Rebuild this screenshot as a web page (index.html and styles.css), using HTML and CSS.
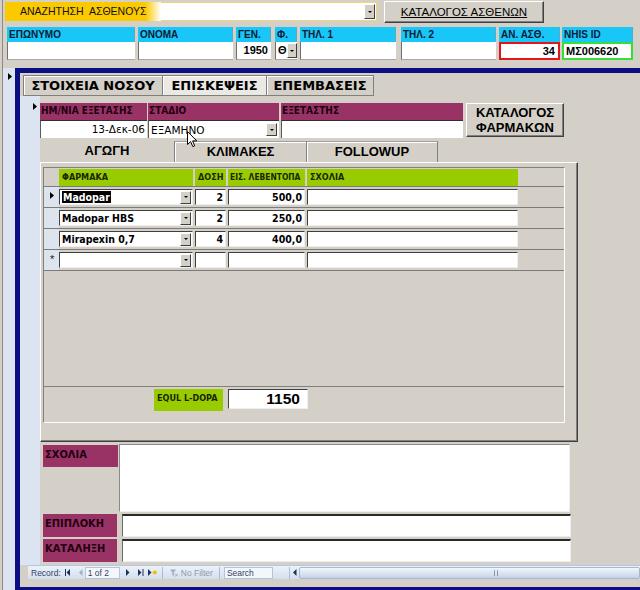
FILE: index.html
```html
<!DOCTYPE html>
<html lang="el">
<head>
<meta charset="utf-8">
<title>Ασθενείς</title>
<link rel="stylesheet" href="styles.css">
</head>
<body>
<div class="screen">
  <header class="hdr">
    <div class="hdr-top">
      <div class="search-lbl">ΑΝΑΖΗΤΗΣΗ&nbsp; ΑΣΘΕΝΟΥΣ</div>
      <div class="search-combo">
        <span class="dd"><span class="dd-mark"></span></span>
      </div>
      <button class="btn btn-patients"><u>ΚΑΤΑΛΟΓΟΣ ΑΣΘΕΝΩΝ</u></button>
    </div>
    <div class="hdr-fields">
      <div class="hf w-sur"><div class="cl">ΕΠΩΝΥΜΟ</div><div class="ci"></div></div>
      <div class="hf w-name"><div class="cl">ΟΝΟΜΑ</div><div class="ci"></div></div>
      <div class="hf w-yr"><div class="cl">ΓΕΝ.</div><div class="ci num">1950</div></div>
      <div class="hf w-sex"><div class="cl">Φ.</div><div class="ci combo-sm"><span>Θ</span><span class="dd dd-sm"><span class="dd-mark"></span></span></div></div>
      <div class="hf w-t1"><div class="cl">ΤΗΛ. 1</div><div class="ci"></div></div>
      <div class="hf w-t2"><div class="cl">ΤΗΛ. 2</div><div class="ci"></div></div>
      <div class="hf w-an"><div class="cl">ΑΝ. ΑΣΘ.</div><div class="ci num red">34</div></div>
      <div class="hf w-nhis"><div class="cl">NHIS ID</div><div class="ci green">ΜΣ006620</div></div>
    </div>
  </header>

  <div class="main">
    <div class="rec-strip"><svg class="tri" width="5" height="7" viewBox="0 0 5 7"><path d="M0 0L4 3.5L0 7Z"/></svg></div>
    <div class="frame">
      <nav class="tabs">
        <div class="tab t1">ΣΤΟΙΧΕΙΑ ΝΟΣΟΥ</div>
        <div class="tab t2 active">ΕΠΙΣΚΕΨΕΙΣ</div>
        <div class="tab t3">ΕΠΕΜΒΑΣΕΙΣ</div>
      </nav>
      <div class="page">
        <div class="rec-col"><svg class="tri" width="5" height="7" viewBox="0 0 5 7"><path d="M0 0L4 3.5L0 7Z"/></svg></div>
        <div class="detail">
          <div class="visit">
            <div class="vf w-date"><div class="ml">ΗΜ/ΝΙΑ ΕΞΕΤΑΣΗΣ</div><div class="vi num">13-Δεκ-06</div></div>
            <div class="vf w-stage"><div class="ml">ΣΤΑΔΙΟ</div><div class="vi combo"><span>ΕΞΑΜΗΝΟ</span><span class="dd dd-st"><span class="dd-mark"></span></span></div></div>
            <div class="vf w-exam"><div class="ml">ΕΞΕΤΑΣΤΗΣ</div><div class="vi"></div></div>
            <button class="btn btn-drugs">ΚΑΤΑΛΟΓΟΣ<br>ΦΑΡΜΑΚΩΝ</button>
            <svg class="cursor" width="11" height="17" viewBox="0 0 11 17"><path d="M0.5 0.5V13.5L3.6 10.6L5.8 15.6L7.7 14.8L5.6 9.9H9.8Z" fill="#fff" stroke="#000" stroke-width="1"/></svg>
          </div>

          <div class="itabs">
            <div class="itab active">ΑΓΩΓΗ</div>
            <div class="itab">ΚΛΙΜΑΚΕΣ</div>
            <div class="itab last">FOLLOWUP</div>
          </div>

          <div class="ipanel">
            <div class="sub">
              <div class="sub-head">
                <div class="sel"></div>
                <div class="gl c-drug">ΦΑΡΜΑΚΑ</div>
                <div class="gl c-dose">ΔΟΣΗ</div>
                <div class="gl c-lev lev-lbl">ΕΙΣ. ΛΕΒΕΝΤΟΠΑ</div>
                <div class="gl c-note">ΣΧΟΛΙΑ</div>
              </div>
              <div class="srow">
                <div class="sel"><svg class="tri" width="5" height="7" viewBox="0 0 5 7"><path d="M0 0L4 3.5L0 7Z"/></svg></div>
                <div class="sc c-drug combo"><span><span class="hl">Madopar</span></span><span class="dd dd-row"><span class="dd-mark"></span></span></div>
                <div class="sc c-dose num">2</div>
                <div class="sc c-lev num">500,0</div>
                <div class="sc c-note"></div>
              </div>
              <div class="srow">
                <div class="sel"></div>
                <div class="sc c-drug combo"><span>Madopar HBS</span><span class="dd dd-row"><span class="dd-mark"></span></span></div>
                <div class="sc c-dose num">2</div>
                <div class="sc c-lev num">250,0</div>
                <div class="sc c-note"></div>
              </div>
              <div class="srow">
                <div class="sel"></div>
                <div class="sc c-drug combo"><span>Mirapexin 0,7</span><span class="dd dd-row"><span class="dd-mark"></span></span></div>
                <div class="sc c-dose num">4</div>
                <div class="sc c-lev num">400,0</div>
                <div class="sc c-note"></div>
              </div>
              <div class="srow">
                <div class="sel"><span class="star">*</span></div>
                <div class="sc c-drug combo"><span></span><span class="dd dd-row"><span class="dd-mark"></span></span></div>
                <div class="sc c-dose num"></div>
                <div class="sc c-lev num"></div>
                <div class="sc c-note"></div>
              </div>
              <div class="sub-fill"></div>
              <div class="sub-foot">
                <div class="gl eq">EQUL L-DOPA</div>
                <div class="eq-val">1150</div>
              </div>
            </div>
          </div>

          <div class="notes">
            <div class="nrow r-big"><div class="nl nl-big">ΣΧΟΛΙΑ</div><div class="ni ni-big"></div></div>
            <div class="nrow r-sm"><div class="nl">ΕΠΙΠΛΟΚΗ</div><div class="ni ni-sm"></div></div>
            <div class="nrow r-sm"><div class="nl">ΚΑΤΑΛΗΞΗ</div><div class="ni ni-sm"></div></div>
          </div>
        </div>
      </div>

      <div class="navbar">
        <span class="nb-lbl">Record:</span>
        <svg class="nb-first" width="5" height="7" viewBox="0 0 5 7"><rect x="0" y="0" width="1" height="7"/><path d="M5 0V7L1.5 3.5Z"/></svg>
        <svg class="nb-prev" width="4" height="7" viewBox="0 0 4 7"><path d="M3.5 0V7L0 3.5Z"/></svg>
        <span class="nb-box">1 of 2</span>
        <svg class="nb-next" width="4" height="7" viewBox="0 0 4 7"><path d="M0 0V7L3.5 3.5Z"/></svg>
        <svg class="nb-last" width="6" height="7" viewBox="0 0 6 7"><path d="M0 0V7L3.5 3.5Z"/><rect x="4.5" y="0" width="1" height="7"/></svg>
        <svg class="nb-new" width="9" height="7" viewBox="0 0 9 7"><path d="M0 0V7L3.5 3.5Z"/><circle cx="6.8" cy="3.5" r="2.1" fill="#f2c200"/></svg>
        <span class="nb-sep s1"></span>
        <svg class="nb-filter" width="8" height="8" viewBox="0 0 8 8"><path d="M0 0.5H6L3.8 3.5V7L2.4 6.2V3.5Z" fill="#a2acbb"/><path d="M5 4.5L8 7.5M8 4.5L5 7.5" stroke="#a2acbb" stroke-width="1"/></svg>
        <span class="nb-nf">No Filter</span>
        <span class="nb-sep s2"></span>
        <span class="nb-search">Search</span>
        <span class="nb-sep s3"></span>
        <svg class="nb-left" width="4" height="7" viewBox="0 0 4 7"><path d="M3.5 0V7L0 3.5Z"/></svg>
        <div class="nb-scroll"><span class="grip"></span></div>
      </div>
    </div>
  </div>
</div>
</body>
</html>
```

FILE: styles.css
```css
* { box-sizing: border-box; }
html, body { margin: 0; padding: 0; }
body {
  background: #d4d0c8;
  font-family: "Liberation Sans", Arial, sans-serif;
  color: #000;
}
.screen { width: 640px; height: 590px; overflow: hidden; }

/* ---------- header ---------- */
.hdr {
  height: 68px;
  box-shadow: inset 2px 0 0 #d4d0c8, inset 3px 0 0 #8e8b84;
}
.hdr-top {
  display: flex;
  align-items: flex-start;
  height: 27px;
  padding: 1px 0 0 5px;
}
.search-lbl {
  width: 156px;
  height: 19px;
  margin-top: 1px;
  background: linear-gradient(90deg, #fbc900 0, #fbc900 90%, #fff 100%);
  font-size: 10.5px;
  line-height: 19px;
  padding-left: 15px;
  white-space: nowrap;
  color: #111;
}
.search-combo {
  display: flex;
  justify-content: flex-end;
  width: 216px;
  height: 19px;
  margin-top: 1px;
  background: #fff;
  border: 1px solid #f1d57c;
  border-left: none;
  padding: 1px 1px 1px 0;
}
.dd {
  display: flex;
  align-items: center;
  justify-content: center;
  width: 11px;
  height: 100%;
  background: #d4d0c8;
  border: 1px solid;
  border-color: #fff #404040 #404040 #fff;
  flex-shrink: 0;
}
.dd-mark {
  width: 0; height: 0;
  border-left: 2px solid transparent;
  border-right: 2px solid transparent;
  border-top: 2px solid #000;
}
.btn {
  font-family: "Liberation Sans", Arial, sans-serif;
  background: #d4d0c8;
  border: 1px solid;
  border-color: #fff #404040 #404040 #fff;
  box-shadow: inset -1px -1px 0 #808080;
  padding: 0;
  color: #000;
}
.btn-patients {
  margin-left: 7px;
  width: 160px;
  height: 22px;
  font-size: 11.5px;
}

.hdr-fields { display: flex; }
.hf { display: flex; flex-direction: column; }
.w-sur { margin-left: 7px; width: 128px; }
.w-name { margin-left: 3px; width: 95px; }
.w-yr { margin-left: 3px; width: 35px; }
.w-sex { margin-left: 4px; width: 22px; }
.w-t1 { margin-left: 3px; width: 96px; }
.w-t2 { margin-left: 5px; width: 95px; }
.w-an { margin-left: 3px; width: 61px; }
.w-nhis { margin-left: 2px; width: 71px; }
.cl {
  height: 15px;
  background: #18c6f7;
  border-right: 1px solid #5aa9c6;
  font-size: 10px;
  font-weight: bold;
  line-height: 15px;
  padding-left: 2px;
  color: #0d1a33;
  white-space: nowrap;
}
.ci {
  height: 18px;
  background: #fff;
  border-left: 1px solid #6f6f6f;
  border-bottom: 1px solid #a8a8a8;
  font-size: 11px;
  font-weight: bold;
  line-height: 16px;
  padding: 0 3px;
  white-space: nowrap;
}
.ci.num { text-align: right; }
.ci.red { border: 2px solid #e3141c; line-height: 14px; }
.ci.green { border: 2px solid #38dd38; line-height: 14px; padding-left: 2px; }
.combo-sm {
  display: flex;
  justify-content: space-between;
  padding: 1px 1px 1px 2px;
  line-height: 15px;
}
.dd-sm { width: 10px; height: 15px; margin-top: 0; }

/* ---------- main frame ---------- */
.main { display: flex; height: 522px; }
.rec-strip {
  width: 13px;
  margin-left: 2px;
  border-left: 1px solid #8e8b84;
  background: #dbe4f0;
  padding: 5px 0 0 5px;
  flex-shrink: 0;
}
.tri { display: block; fill: #000; }
.frame {
  flex: 1;
  display: flex;
  flex-direction: column;
  border-left: 5px solid #0b0f83;
  border-top: 5px solid #0b0f83;
  border-bottom: 3px solid #0b0f83;
  background: #d4d0c8;
  min-width: 0;
}
.tabs {
  display: flex;
  height: 23px;
  padding: 2px 0 0 3px;
  flex-shrink: 0;
}
.tab {
  height: 21px;
  border: 1px solid #7f7f7f;
  box-shadow: inset 1px 1px 0 #fff;
  font-family: "DejaVu Sans", sans-serif;
  font-weight: bold;
  font-size: 13px;
  line-height: 19px;
  text-align: center;
  white-space: nowrap;
}
.t1 { width: 140px; }
.t2 { width: 104px; background: #ebe9e4; border-left: none; }
.t3 { width: 107px; border-left: none; }

.page { flex: 1; display: flex; min-height: 0; }
.rec-col {
  width: 20px;
  background: #dbe4f0;
  padding: 7px 0 0 13px;
  flex-shrink: 0;
}
.detail {
  flex: 1;
  display: flex;
  flex-direction: column;
  padding-top: 7px;
}

/* ---------- visit row ---------- */
.visit {
  position: relative;
  display: flex;
  height: 35px;
  flex-shrink: 0;
}
.vf { display: flex; flex-direction: column; }
.w-date { width: 107px; }
.w-stage { width: 131px; margin-left: 1px; }
.w-exam { width: 182px; margin-left: 2px; }
.ml {
  height: 17px;
  background: #993366;
  font-family: "DejaVu Sans Condensed", "DejaVu Sans", sans-serif;
  font-stretch: condensed;
  font-weight: bold;
  font-size: 10px;
  line-height: 16px;
  color: #1e0010;
  padding-left: 1px;
  white-space: nowrap;
}
.vi {
  height: 18px;
  background: #fff;
  border-top: 1px solid #303030;
  border-left: 1px solid #5a5a5a;
  font-family: "DejaVu Sans", sans-serif;
  font-size: 10.5px;
  line-height: 16px;
  padding: 0 2px;
  white-space: nowrap;
}
.vi.num { text-align: right; }
.vi.combo {
  display: flex;
  justify-content: space-between;
  align-items: center;
  padding-right: 2px;
}
.dd-st { width: 11px; height: 13px; }
.btn-drugs {
  margin-left: 3px;
  width: 98px;
  height: 34px;
  font-weight: bold;
  font-size: 13px;
  line-height: 15px;
}
.cursor { position: absolute; left: 147px; top: 28px; }

/* ---------- inner tabs ---------- */
.itabs {
  display: flex;
  height: 21px;
  margin-top: 3px;
  flex-shrink: 0;
}
.itab {
  width: 132px;
  font-weight: bold;
  font-size: 13px;
  line-height: 19px;
  text-align: center;
  border-top: 1px solid #a0a0a0;
  border-left: 1px solid #808080;
  box-shadow: inset 1px 1px 0 #fff;
}
.itab.active {
  width: 134px;
  border: none;
  box-shadow: none;
  line-height: 20px;
}
.itab.last { border-right: 1px solid #808080; }

.ipanel {
  width: 538px;
  height: 280px;
  flex-shrink: 0;
  border-top: 1px solid #fff;
  border-left: 1px solid #fff;
  border-right: 1px solid #404040;
  border-bottom: 1px solid #404040;
  box-shadow: inset -1px -1px 0 #808080;
  padding: 4px 0 0 2px;
}
.sub {
  width: 522px;
  height: 256px;
  border-top: 1px solid #808080;
  border-left: 1px solid #808080;
  border-right: 1px solid #fff;
  border-bottom: 1px solid #fff;
  display: flex;
  flex-direction: column;
}
.sub-head { display: flex; height: 18px; flex-shrink: 0; }
.sel { width: 15px; flex-shrink: 0; }
.gl {
  background: #99cc00;
  height: 17px;
  margin-top: 1px;
  font-family: "DejaVu Sans Condensed", "DejaVu Sans", sans-serif;
  font-stretch: condensed;
  font-weight: bold;
  font-size: 9px;
  line-height: 12px;
  color: #1a2400;
  padding: 2px 0 0 3px;
  white-space: nowrap;
  overflow: hidden;
}
.lev-lbl { font-size: 8.4px; padding-left: 2px; }
.c-drug { width: 134px; }
.c-dose { width: 31px; margin-left: 2px; }
.c-lev { width: 77px; margin-left: 2px; }
.c-note { width: 211px; margin-left: 2px; }

.srow {
  display: flex;
  height: 21px;
  border-top: 1px solid #7b7b7b;
  flex-shrink: 0;
}
.srow .sel {
  background: #dde4ee;
  padding: 5px 0 0 6px;
}
.star { display: block; font-size: 11px; line-height: 8px; margin-top: 0; color: #222; }
.sc {
  height: 16px;
  margin-top: 2px;
  background: #fff;
  border: 1px solid;
  border-color: #404040 #eeeeee #eeeeee #404040;
  font-family: "DejaVu Sans Condensed", "DejaVu Sans", sans-serif;
  font-stretch: condensed;
  font-weight: bold;
  font-size: 10.5px;
  line-height: 14px;
  padding: 0 2px;
  white-space: nowrap;
}
.sc.num { text-align: right; }
.sc.combo {
  display: flex;
  justify-content: space-between;
  align-items: center;
  padding-right: 1px;
}
.hl { background: #000; color: #fff; padding: 0 1px; }
.dd-row { width: 11px; height: 13px; }

.sub-fill { flex: 1; border-top: 1px solid #7b7b7b; }
.sub-foot {
  height: 36px;
  flex-shrink: 0;
  border-top: 1px solid #808080;
  display: flex;
  align-items: flex-start;
  padding-top: 2px;
}
.gl.eq {
  width: 69px;
  height: 22px;
  margin: 0 0 0 110px;
  padding-top: 3px;
}
.eq-val {
  width: 80px;
  height: 20px;
  margin-left: 5px;
  background: #fff;
  border: 1px solid;
  border-color: #404040 #eeeeee #eeeeee #404040;
  font-weight: bold;
  font-size: 15.5px;
  line-height: 18px;
  text-align: right;
  padding-right: 7px;
}

/* ---------- notes ---------- */
.notes {
  display: flex;
  flex-direction: column;
  margin-top: 2px;
}
.nrow { display: flex; padding-left: 3px; }
.r-sm { margin-top: 2px; }
.nl {
  width: 74px;
  height: 23px;
  background: #993366;
  font-family: "DejaVu Sans Condensed", "DejaVu Sans", sans-serif;
  font-stretch: condensed;
  font-weight: bold;
  font-size: 11px;
  line-height: 14px;
  color: #1e0010;
  padding: 3px 0 0 2px;
}
.nl-big { width: 75px; height: 22px; margin-top: 1px; }
.ni { background: #fff; }
.ni-big {
  width: 451px;
  height: 68px;
  margin-left: 1px;
  border: 1px solid;
  border-color: #8a8a8a #eeeeee #eeeeee #8a8a8a;
}
.ni-sm {
  width: 449px;
  height: 23px;
  margin-left: 5px;
  border-top: 2px solid #2a2a2a;
  border-left: 1px solid #6a6a6a;
  border-right: 1px solid #eeeeee;
  border-bottom: 1px solid #eeeeee;
}

/* ---------- navigation bar ---------- */
.navbar {
  height: 14px;
  margin: 0 0 8px 8px;
  display: flex;
  align-items: center;
  flex-shrink: 0;
  background: linear-gradient(#edf2f9, #d3dff0);
  border-top: 1px solid #b5c6de;
  font-size: 8.5px;
  color: #33445f;
  white-space: nowrap;
}
.navbar svg { display: block; fill: #1e3358; flex-shrink: 0; }
.nb-lbl { margin-left: 3px; }
.nb-first { margin-left: 4px; }
.nb-prev { margin-left: 9px; fill: #a3b0c3 !important; }
.nb-box {
  margin-left: 2px;
  width: 35px;
  height: 12px;
  line-height: 10px;
  padding-left: 2px;
  background: #f3f7fc;
  border: 1px solid #b3c4dc;
}
.nb-next { margin-left: 6px; }
.nb-last { margin-left: 8px; }
.nb-new { margin-left: 4px; }
.nb-sep { width: 1px; height: 12px; background: #a9bbd6; flex-shrink: 0; }
.s1 { margin-left: 5px; }
.nb-filter { margin-left: 7px; }
.nb-nf { margin-left: 3px; color: #9099a8; }
.s2 { margin-left: 6px; }
.nb-search {
  margin-left: 4px;
  width: 49px;
  height: 12px;
  line-height: 10px;
  padding-left: 2px;
  background: #f3f7fc;
  border: 1px solid #b3c4dc;
}
.s3 { margin-left: 16px; }
.nb-left { margin-left: 3px; }
.nb-scroll {
  flex: 1;
  height: 12px;
  margin-left: 2px;
  background: linear-gradient(#f2f6fb, #c3d3e8);
  border: 1px solid #a3b8d4;
  border-radius: 2px;
  display: flex;
  align-items: center;
}
.grip {
  margin-left: 194px;
  width: 4px;
  height: 6px;
  border-left: 1px solid #8a9cb8;
  border-right: 1px solid #8a9cb8;
}
```
